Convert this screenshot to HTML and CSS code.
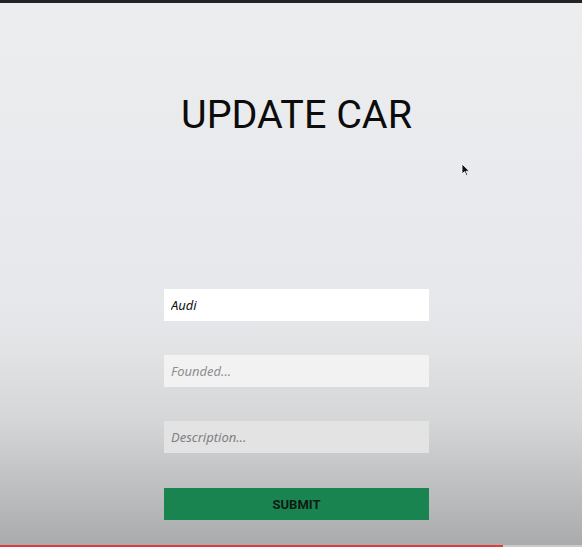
FILE: index.html
```html
<!DOCTYPE html>
<html lang="en">
<head>
<meta charset="utf-8">
<title>Update Car</title>
<link rel="stylesheet" href="styles.css">
</head>
<body>
<div class="page">
  <div class="topbar"></div>
  <main class="main">
    <h1 class="title">UPDATE CAR</h1>
    <form class="form">
      <input class="field field-1" type="text" value="Audi">
      <input class="field field-2" type="text" placeholder="Founded...">
      <input class="field field-3" type="text" placeholder="Description...">
      <button class="submit" type="button">SUBMIT</button>
    </form>
  </main>
  <div class="bottombar"><div class="progress"></div></div>
  <svg class="cursor" width="10" height="14" viewBox="0 0 10 14"><path d="M1 1 L1 11 L3.5 8.6 L5.4 12.6 L6.8 12 L5 8.2 L8.4 8.2 Z" fill="#111" stroke="#fff" stroke-width="0.8"/></svg>
</div>
</body>
</html>
```
FILE: styles.css
```css
html, body {
  margin: 0;
  padding: 0;
}
body {
  width: 582px;
  height: 547px;
  overflow: hidden;
  font-family: Roboto, "Liberation Sans", sans-serif;
}
.page {
  position: relative;
  width: 582px;
  height: 547px;
  display: flex;
  flex-direction: column;
  background: linear-gradient(to bottom, #ecedef 0px, #e7e8eb 300px, #e2e3e5 350px, #d5d6d8 420px, #bdbec0 490px, #a9aaac 547px);
}
.topbar {
  height: 3px;
  background: #232323;
  flex: none;
}
.main {
  flex: 1;
  display: flex;
  flex-direction: column;
  align-items: center;
  padding-left: 11px;
}
.title {
  margin: 88px 0 0 0;
  font-family: Roboto, "Liberation Sans", sans-serif;
  font-weight: 400;
  font-size: 39.5px;
  line-height: 48px;
  color: #0c0c0c;
  letter-spacing: 0;
}
.form {
  margin-top: 150px;
  display: flex;
  flex-direction: column;
  gap: 34px;
  width: 265px;
}
.field {
  box-sizing: border-box;
  width: 265px;
  height: 32px;
  border: none;
  outline: none;
  padding: 0 7px;
  font-family: "Noto Sans", sans-serif;
  font-style: italic;
  font-size: 13px;
  color: #111;
}
.field::placeholder {
  color: #8d8e90;
  font-style: italic;
}
.field-1 { background: #ffffff; }
.field-2 { background: #f2f2f3; }
.field-3 { background: #e3e3e4; }
.field-3::placeholder { color: #7e7f81; }
.submit {
  height: 32px;
  width: 265px;
  border: none;
  background: #1a8450;
  color: #0e1a12;
  font-family: Roboto, "Liberation Sans", sans-serif;
  font-weight: 700;
  font-size: 13px;
  padding: 0;
  margin-top: 1px;
}
.bottombar {
  height: 2px;
  flex: none;
  background: #c9cacd;
}
.progress {
  width: 503px;
  height: 2px;
  background: #e33b3b;
}
.cursor {
  position: absolute;
  left: 461px;
  top: 163px;
}
```
